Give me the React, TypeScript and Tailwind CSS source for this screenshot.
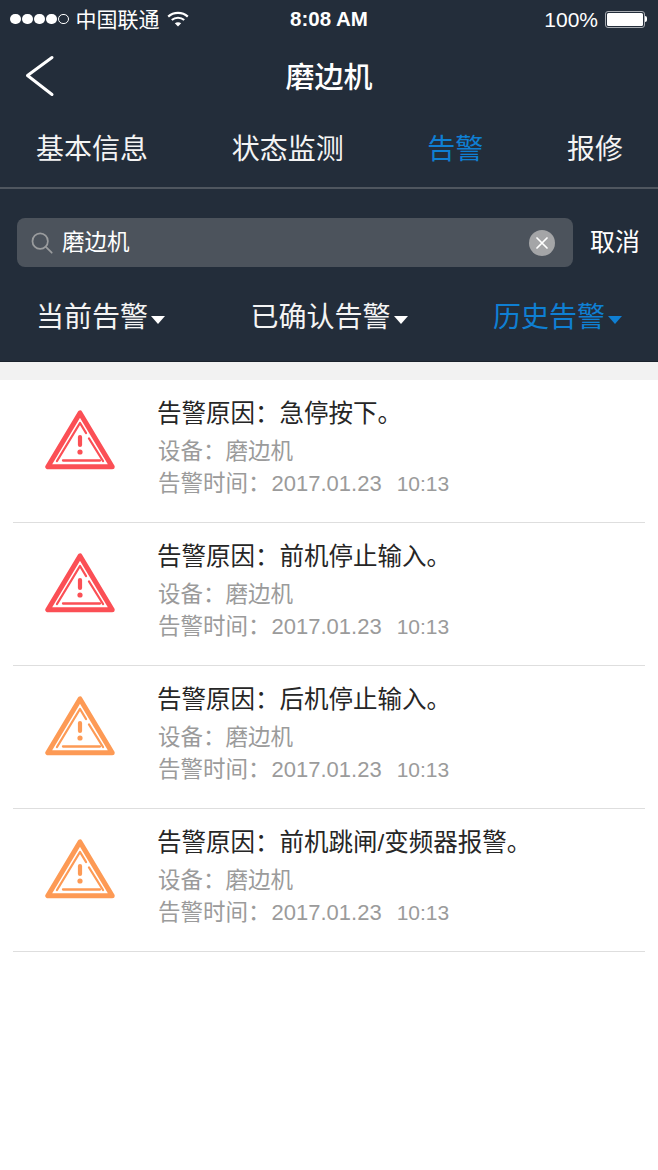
const CJK = "font-['Liberation_Sans','Noto_Sans_CJK_SC',sans-serif]";

const ALARMS = [
  { reason: '急停按下。', color: '#fb4f55' },
  { reason: '前机停止输入。', color: '#fb4f55' },
  { reason: '后机停止输入。', color: '#fd9a55' },
  { reason: '前机跳闸/变频器报警。', color: '#fd9a55' },
];

function WarnIcon({ color }: { color: string }) {
  return (
    <svg width="70" height="60" viewBox="0 0 70 60" fill="none" stroke={color} strokeLinecap="round" strokeLinejoin="round">
      <path d="M35 3 L2.8 56.8 H67.2 Z" strokeWidth="5" />
      <path d="M12 51 L35 13 L41 23" strokeWidth="2.3" />
      <path d="M44 28.5 L58 51" strokeWidth="2.3" />
      <path d="M18 50.5 H55" strokeWidth="2.3" />
      <path d="M35 27 V35" strokeWidth="4.2" />
      <circle cx="35" cy="42" r="2.6" fill={color} stroke="none" />
    </svg>
  );
}

function Caret({ className }: { className: string }) {
  return <span className={`ml-[3px] mt-[3px] h-0 w-0 border-x-[7.5px] border-t-[8px] border-x-transparent ${className}`} />;
}

function StatusBar() {
  return (
    <div className="flex h-[38px] items-center justify-between pl-[10px] pr-[11px] text-white">
      <div className="flex items-center">
        <div className="flex items-center gap-[1.5px]">
          <span className="h-[10.5px] w-[10.5px] rounded-full bg-white" />
          <span className="h-[10.5px] w-[10.5px] rounded-full bg-white" />
          <span className="h-[10.5px] w-[10.5px] rounded-full bg-white" />
          <span className="h-[10.5px] w-[10.5px] rounded-full bg-white" />
          <span className="h-[10.5px] w-[10.5px] rounded-full border border-white" />
        </div>
        <span className="ml-[7px] text-[21px] leading-none">中国联通</span>
        <svg className="ml-[7px]" width="22" height="16" viewBox="0 0 22 16" fill="none" stroke="white" strokeWidth="2.2">
          <path d="M1.2 5.6 C6.6 .6 15.4 .6 20.8 5.6" />
          <path d="M4.8 9 C8.2 6 13.8 6 17.2 9" />
          <path d="M11 15.5 L7.8 12.2 C9.6 10.8 12.4 10.8 14.2 12.2 Z" fill="white" stroke="none" />
        </svg>
      </div>
      <span className="absolute left-[290px] text-[20.5px] font-bold leading-none">8:08 AM</span>
      <div className="flex items-center">
        <span className="text-[21px] leading-none">100%</span>
        <span className="ml-[7px] flex h-[17px] w-[40px] items-center rounded-[3px] border border-[#a8acb2] p-[1px]">
          <span className="h-full w-full rounded-[1.5px] bg-white" />
        </span>
        <span className="h-[6px] w-[2px] rounded-r-sm bg-white" />
      </div>
    </div>
  );
}

export default function App() {
  return (
    <div className={`relative min-h-[1170px] w-[658px] bg-white ${CJK}`}>
      <div className="h-[362px] border-b border-[#1a222c] bg-[#232d3a]">
        <StatusBar />
        <div className="relative flex h-[80px] items-center justify-center">
          <svg className="absolute left-[24px] top-[17px]" width="32" height="42" viewBox="0 0 32 42" fill="none" stroke="white" strokeWidth="3" strokeLinecap="round" strokeLinejoin="round">
            <path d="M28 2.5 L3.5 20.5 L28 39.5" />
          </svg>
          <span className="text-[29px] font-medium leading-none text-white">磨边机</span>
        </div>
        <div className="flex h-[71px] items-start justify-between border-b-2 border-[#4f565f] pl-[36px] pr-[35px] pt-[14px] text-[28px] leading-[36px] text-[#f4f4f4]">
          <span>基本信息</span>
          <span>状态监测</span>
          <span className="text-[#0f7fd3]">告警</span>
          <span>报修</span>
        </div>
        <div className="mt-[29px] flex items-center pl-[17px]">
          <div className="flex h-[49px] w-[556px] items-center rounded-[8px] bg-[#4c535c] pl-[14px] pr-[18px]">
            <svg width="22" height="22" viewBox="0 0 24 24" fill="none" stroke="#9a9c9e" strokeWidth="1.9" strokeLinecap="round">
              <circle cx="10" cy="10" r="8.4" />
              <path d="M16.2 16.2 L22.6 22.6" />
            </svg>
            <span className="ml-[9px] flex-1 pt-[2px] text-[22.5px] leading-none text-white">磨边机</span>
            <span className="flex h-[26px] w-[26px] items-center justify-center rounded-full bg-[#a4a5a7]">
              <svg width="12" height="12" viewBox="0 0 12 12" stroke="white" strokeWidth="1.7" strokeLinecap="round">
                <path d="M1 1 L11 11 M11 1 L1 11" />
              </svg>
            </span>
          </div>
          <span className="ml-[17px] text-[25px] leading-none text-white">取消</span>
        </div>
        <div className="mt-[29px] flex items-center justify-between pl-[36px] pr-[36px] text-[28px] leading-[44px] text-[#f4f4f4]">
          <span className="flex items-center">当前告警<Caret className="border-t-white" /></span>
          <span className="flex items-center">已确认告警<Caret className="border-t-white" /></span>
          <span className="flex items-center text-[#0f7fd3]">历史告警<Caret className="border-t-[#0f7fd3]" /></span>
        </div>
      </div>
      <div className="h-[18px] bg-[#f2f2f2]" />
      <div className="px-[13px]">
        {ALARMS.map((a, i) => (
          <div key={i} className="flex h-[143px] items-start border-b border-[#dedede]">
            <div className="ml-[32px] mt-[30px] shrink-0">
              <WarnIcon color={a.color} />
            </div>
            <div className="ml-[43px] pt-[17px]">
              <div className="-ml-[1px] text-[24.5px] leading-[34px] text-[#262626]">告警原因：{a.reason}</div>
              <div className="mt-[5px] text-[22.5px] leading-[32px] text-[#9b9b9b]">设备：磨边机</div>
              <div className="flex text-[22.5px] leading-[32px] text-[#9b9b9b]">
                告警时间：<span className="ml-[1px] text-[22px]">2017.01.23</span><span className="ml-[15px] text-[21px]">10:13</span>
              </div>
            </div>
          </div>
        ))}
      </div>
    </div>
  );
}
